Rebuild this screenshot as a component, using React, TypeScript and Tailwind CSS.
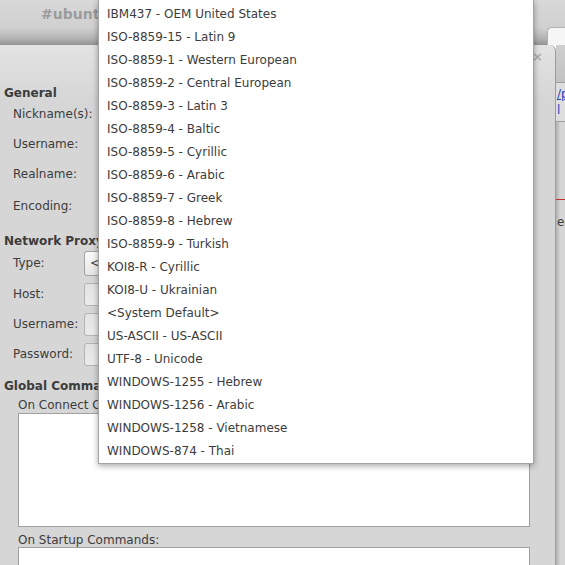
import React from 'react';

const encodings = [
  'IBM437 - OEM United States',
  'ISO-8859-15 - Latin 9',
  'ISO-8859-1 - Western European',
  'ISO-8859-2 - Central European',
  'ISO-8859-3 - Latin 3',
  'ISO-8859-4 - Baltic',
  'ISO-8859-5 - Cyrillic',
  'ISO-8859-6 - Arabic',
  'ISO-8859-7 - Greek',
  'ISO-8859-8 - Hebrew',
  'ISO-8859-9 - Turkish',
  'KOI8-R - Cyrillic',
  'KOI8-U - Ukrainian',
  '<System Default>',
  'US-ASCII - US-ASCII',
  'UTF-8 - Unicode',
  'WINDOWS-1255 - Hebrew',
  'WINDOWS-1256 - Arabic',
  'WINDOWS-1258 - Vietnamese',
  'WINDOWS-874 - Thai',
];

const font = { fontFamily: '"DejaVu Sans", Verdana, sans-serif' };

function Entry() {
  return (
    <div className="h-[23px] w-[300px] shrink-0 rounded-[3px] border border-[#b4b4b4] bg-[linear-gradient(to_bottom,#e2e2e2,#ececec)]" />
  );
}

function ProxyRow({ label, mt, combo }: { label: string; mt: string; combo?: boolean }) {
  return (
    <div className={`flex h-[20px] items-center ${mt}`}>
      <span className="w-[84px] shrink-0 pl-[13px] whitespace-nowrap">{label}</span>
      {combo ? (
        <div className="flex h-[25px] w-[300px] shrink-0 items-center rounded-[3px] border border-[#a2a2a2] bg-[linear-gradient(to_bottom,#fbfbfb,#e6e6e6)] pl-[5px]">
          &lt;None&gt;
        </div>
      ) : (
        <Entry />
      )}
    </div>
  );
}

export default function App() {
  return (
    <div className="relative h-[565px] w-[565px] overflow-hidden text-[12px] text-[#3c3c3c]" style={font}>
      {/* background window title bar */}
      <div className="flex h-[45px] bg-[linear-gradient(to_bottom,#d8d8d8_0%,#d0d0d0_62%,#b4b4b4_85%,#929292_100%)]">
        <div className="flex-1 pl-[41px] pt-[4px] text-[14px] font-bold text-[#9c9c9c]">#ubuntu</div>
        <div className="mt-[27px] h-[18px] w-[18px] rounded-tl-[5px] border-l border-t border-[#b0b0b0] bg-[#f6f6f6]" />
      </div>

      <div className="flex h-[520px]">
        {/* dialog */}
        <div className="relative w-[556px] shrink-0 rounded-tr-[6px] border-r border-[#9c9c9c] bg-[linear-gradient(to_bottom,#e3e3e3_0px,#d6d6d6_55px,#d6d6d6_100%)]">
          <div className="flex h-[38px] justify-end pr-[12px] pt-[5px]">
            <span className="text-[13px] font-bold leading-none text-[#ababab]">×</span>
          </div>

          <div className="flex h-[20px] items-center pl-[4px] font-bold">General</div>
          <div className="mt-[1px] flex h-[20px] items-center pl-[13px]">Nickname(s):</div>
          <div className="mt-[10px] flex h-[20px] items-center pl-[13px]">Username:</div>
          <div className="mt-[10px] flex h-[20px] items-center pl-[13px]">Realname:</div>
          <div className="mt-[12px] flex h-[20px] items-center pl-[13px]">Encoding:</div>

          <div className="mt-[15px] flex h-[20px] items-center pl-[4px] font-bold">Network Proxy</div>
          <ProxyRow label="Type:" mt="mt-[2px]" combo />
          <ProxyRow label="Host:" mt="mt-[11px]" />
          <ProxyRow label="Username:" mt="mt-[10px]" />
          <ProxyRow label="Password:" mt="mt-[10px]" />

          <div className="mt-[12px] flex h-[20px] items-center pl-[4px] font-bold">Global Commands</div>
          <div className="mt-[1px] flex h-[16px] items-center pl-[18px]">On Connect Commands:</div>
          <div className="ml-[18px] h-[114px] w-[512px] border border-[#a0a0a0] bg-white" />
          <div className="mt-[4px] flex h-[16px] items-center pl-[18px] pt-[2px]">On Startup Commands:</div>
          <div className="ml-[18px] h-[114px] w-[512px] border border-[#a0a0a0] bg-white" />
        </div>

        {/* sliver of the window behind */}
        <div className="flex flex-1 flex-col bg-[linear-gradient(to_right,#b2b2b2,#c8c8c8_3px,#d6d6d6_4px)]">
          <div className="h-[37px] bg-[linear-gradient(to_bottom,#cfcfcf,#c2c2c2)]" />
          <div className="h-[40px] overflow-hidden border-y border-[#9e9e9e] bg-[#dedede] pl-[1px] pt-[3px] text-[12px] leading-[16px] text-[#2848c0]">
            <div className="underline">/p</div>
            <div>l</div>
          </div>
          <div className="mt-[77px] h-px bg-[#c03030]" />
          <div className="mt-[13px] overflow-hidden whitespace-nowrap pl-[1px] text-[#3c3c3c]">ec</div>
        </div>
      </div>

      {/* open encoding dropdown */}
      <div className="absolute left-[98px] top-0 w-[436px] border border-t-0 border-[#a4a4a4] bg-white pb-[1px] pt-[2px] shadow-[0_2px_6px_rgba(0,0,0,0.35)]">
        {encodings.map((e) => (
          <div key={e} className="flex h-[23px] items-center whitespace-nowrap pl-[8px]">
            {e}
          </div>
        ))}
      </div>
    </div>
  );
}
